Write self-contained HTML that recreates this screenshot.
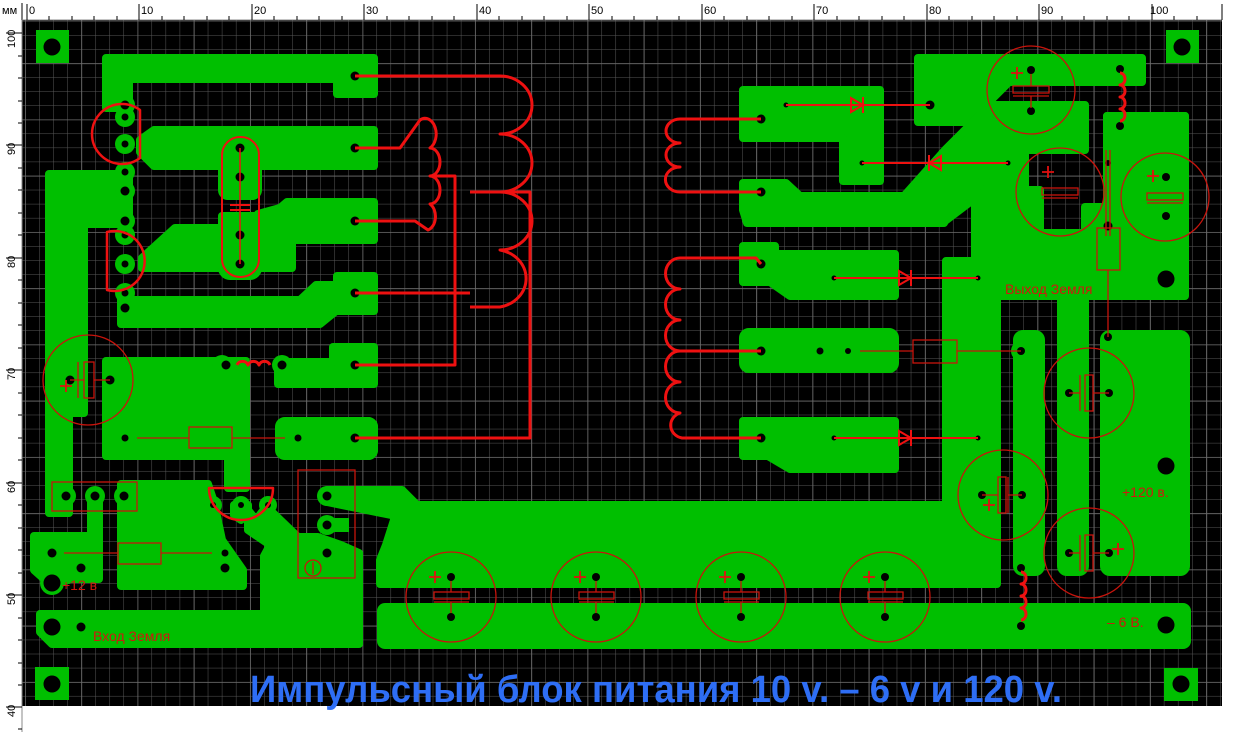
<!DOCTYPE html>
<html><head><meta charset="utf-8"><style>
html,body{margin:0;padding:0;background:#fff;}
svg{display:block;}
text{font-family:"Liberation Sans","DejaVu Sans",sans-serif;}
</style></head><body>
<svg width="1239" height="732" viewBox="0 0 1239 732" xmlns="http://www.w3.org/2000/svg">
<defs>
<pattern id="gmin" width="14.06" height="14.06" patternUnits="userSpaceOnUse" x="25" y="7">
<path d="M0 0V14.06M0 0H14.06" stroke="#595959" stroke-width="1" fill="none"/>
</pattern>
<pattern id="gmaj" width="56.25" height="56.25" patternUnits="userSpaceOnUse" x="25" y="7">
<path d="M0 0V56.25M0 0H56.25" stroke="#6c6c6c" stroke-width="1.6" fill="none"/>
</pattern>
</defs>
<rect width="1239" height="732" fill="#fff"/>
<rect x="22" y="20" width="1200" height="686" fill="#000"/>
<rect x="22" y="20" width="1200" height="686" fill="url(#gmin)"/>
<rect x="22" y="20" width="1200" height="686" fill="url(#gmaj)"/>

<!-- rulers -->
<g font-size="11" fill="#000">
<text x="2" y="14">мм</text>
<line x1="22" y1="3" x2="22" y2="20" stroke="#000"/>
<line x1="22" y1="20" x2="1222" y2="20" stroke="#888"/>
<line x1="22" y1="20" x2="22" y2="732" stroke="#888"/>
<g text-anchor="start">
<text x="29" y="14">0</text><text x="141" y="14">10</text><text x="254" y="14">20</text><text x="366" y="14">30</text><text x="479" y="14">40</text><text x="591" y="14">50</text><text x="704" y="14">60</text><text x="816" y="14">70</text><text x="929" y="14">80</text><text x="1041" y="14">90</text><text x="1150" y="14">100</text>
</g>
<g stroke="#000" stroke-width="1">
<path d="M27 4V20M139 4V20M252 4V20M364 4V20M477 4V20M589 4V20M702 4V20M814 4V20M927 4V20M1039 4V20M1152 4V20M1222 4V20"/>
<path d="M49 16V20M72 16V20M94 16V20M117 16V20M162 16V20M184 16V20M207 16V20M229 16V20M274 16V20M297 16V20M319 16V20M342 16V20M387 16V20M409 16V20M432 16V20M454 16V20M499 16V20M522 16V20M544 16V20M567 16V20M612 16V20M634 16V20M657 16V20M679 16V20M724 16V20M747 16V20M769 16V20M792 16V20M837 16V20M859 16V20M882 16V20M904 16V20M949 16V20M972 16V20M994 16V20M1017 16V20M1062 16V20M1084 16V20M1107 16V20M1129 16V20M1174 16V20M1197 16V20"/>
<path d="M6 33H22M6 145H22M6 258H22M6 370H22M6 483H22M6 595H22M6 707H22"/>
<path d="M18 56H22M18 78H22M18 101H22M18 123H22M18 168H22M18 190H22M18 213H22M18 235H22M18 280H22M18 303H22M18 325H22M18 348H22M18 393H22M18 415H22M18 438H22M18 460H22M18 505H22M18 528H22M18 550H22M18 573H22M18 618H22M18 640H22M18 663H22M18 685H22M18 729H22"/>
</g>
<g>
<text transform="translate(15,48) rotate(-90)">100</text>
<text transform="translate(15,155) rotate(-90)">90</text>
<text transform="translate(15,268) rotate(-90)">80</text>
<text transform="translate(15,380) rotate(-90)">70</text>
<text transform="translate(15,493) rotate(-90)">60</text>
<text transform="translate(15,605) rotate(-90)">50</text>
<text transform="translate(15,717) rotate(-90)">40</text>
</g>
</g>

<!-- GREEN COPPER -->
<g fill="#00bf00" stroke="#00bf00" stroke-width="8" stroke-linejoin="round">
<rect x="36" y="30" width="33" height="33" stroke-width="0"/>
<rect x="1166" y="30" width="33" height="33" stroke-width="0"/>
<rect x="35" y="667" width="34" height="33" stroke-width="0"/>
<rect x="1164" y="668" width="34" height="33" stroke-width="0"/>

<polygon points="106,58 374,58 374,94 337,94 337,79 129,79 129,108 106,108"/>
<circle cx="125" cy="105" r="10" stroke-width="0"/>
<circle cx="125" cy="117" r="10" stroke-width="0"/>
<polygon points="154,130 374,130 374,166 154,166 140,152 140,140"/>
<circle cx="125" cy="144" r="10" stroke-width="0"/>
<rect x="222" y="140" width="36" height="56" rx="6"/>
<polygon points="287,202 374,202 374,240 292,240 292,268 142,268 142,258 175,228 222,228 222,216 258,216 258,214 280,208"/>
<rect x="222" y="216" width="36" height="60" rx="8"/>
<circle cx="125" cy="264" r="10" stroke-width="0"/>
<polygon points="337,276 374,276 374,311 336,311 320,324 121,324 121,300 300,300 316,285 337,285"/>
<circle cx="125" cy="293" r="10" stroke-width="0"/>
<polygon points="49,174 129,174 129,224 84,224 84,413 69,413 69,513 49,513"/>
<circle cx="125" cy="172" r="10" stroke-width="0"/>
<circle cx="125" cy="191" r="10" stroke-width="0"/>
<circle cx="125" cy="221" r="10" stroke-width="0"/>
<circle cx="125" cy="235" r="10" stroke-width="0"/>
<polygon points="106,361 246,361 246,488 228,488 228,456 106,456"/>
<circle cx="222" cy="365" r="10" stroke-width="0"/>
<polygon points="333,347 374,347 374,384 278,384 278,362 333,362"/>
<circle cx="282" cy="365" r="10" stroke-width="0"/>
<rect x="279" y="421" width="95" height="35" rx="6"/>
<rect x="337" y="421" width="37" height="35" rx="6"/>
<circle cx="66" cy="496" r="10" stroke-width="0"/>
<circle cx="95" cy="496" r="10" stroke-width="0"/>
<circle cx="124" cy="496" r="10" stroke-width="0"/>
<rect x="87" y="496" width="16" height="50" stroke-width="0"/>
<polygon points="121,484 208,484 214,502 222,540 243,570 243,586 121,586"/>
<polygon points="34,536 99,536 99,579 70,579 52,586 34,570"/>
<circle cx="52" cy="583" r="12" stroke-width="0"/>
<circle cx="213" cy="505" r="9" stroke-width="0"/>
<circle cx="241" cy="505" r="9" stroke-width="0"/>
<circle cx="268" cy="505" r="9" stroke-width="0"/>
<polygon points="234,505 248,505 248,530 270,545 264,556 264,620 359,620 359,553 341,545 318,537 298,537 272,512 262,512 256,520 248,510 241,520 234,515"/>
<circle cx="327" cy="496" r="10" stroke-width="0"/>
<circle cx="327" cy="525" r="10" stroke-width="0"/>
<polygon points="327,490 402,490 416,504 416,520 327,502"/>
<rect x="327" y="518" width="22" height="14" stroke-width="0"/>
<polygon points="40,614 359,614 359,644 52,644 40,632"/>
<circle cx="52" cy="627" r="13" stroke-width="0"/>
<circle cx="81" cy="627" r="9" stroke-width="0"/>
<polygon points="394,505 991,505 991,584 380,584 380,560 386,545 394,520"/>
<rect x="381" y="607" width="806" height="38" rx="4"/>

<polygon points="918,58 1142,58 1142,82 1009,82 978,113 978,122 918,122"/>
<polygon points="743,90 880,90 880,181 843,181 843,138 743,138"/>
<polygon points="743,183 786,183 800,196 904,196 945,150 990,105 1085,105 1085,150 1025,150 1025,175 1000,178 978,196 945,221 944,223 747,223 743,210"/>
<polygon points="1107,116 1185,116 1185,296 975,296 975,190 1000,158 1025,158 1025,190 1040,190 1040,233 1085,233 1085,207 1107,207"/>
<polygon points="1107,116 1185,116 1185,178 1148,178 1148,240 1125,240 1125,232 1107,232"/>
<rect x="946" y="261" width="51" height="323"/>
<rect x="1017" y="334" width="24" height="238" rx="6"/>
<circle cx="1021" cy="351" r="10" stroke-width="0"/>
<rect x="1061" y="300" width="24" height="104" />
<rect x="1061" y="330" width="24" height="242" rx="6"/>
<rect x="1104" y="334" width="82" height="238" rx="6"/>
<polygon points="743,246 775,246 775,254 895,254 895,296 790,296 770,282 743,282"/>
<rect x="743" y="332" width="152" height="37" rx="6"/>
<polygon points="743,421 895,421 895,469 790,469 768,456 743,456"/>
</g>

<!-- HOLES -->
<g fill="#000">
<circle cx="52" cy="47" r="8.5"/><circle cx="1182" cy="47" r="8.5"/><circle cx="52" cy="684" r="8.5"/><circle cx="1181" cy="684" r="8.5"/>
<circle cx="52" cy="583" r="8.5"/><circle cx="52" cy="627" r="8.5"/><circle cx="1166" cy="279" r="8.5"/><circle cx="1166" cy="466" r="8.5"/><circle cx="1166" cy="625" r="8.5"/>
<circle cx="355" cy="76" r="4.5"/><circle cx="355" cy="148" r="4.5"/><circle cx="355" cy="221" r="4.5"/><circle cx="355" cy="293" r="4.5"/><circle cx="355" cy="365" r="4.5"/><circle cx="355" cy="438" r="4.5"/>
<circle cx="125" cy="105" r="4.5"/><circle cx="125" cy="117" r="3.5"/><circle cx="125" cy="144" r="3.5"/><circle cx="125" cy="172" r="3.5"/><circle cx="125" cy="191" r="4.5"/><circle cx="125" cy="221" r="4.5"/><circle cx="125" cy="235" r="3.5"/><circle cx="125" cy="264" r="3.5"/><circle cx="125" cy="293" r="3.5"/><circle cx="125" cy="308" r="4.5"/>
<circle cx="240" cy="148" r="4.5"/><circle cx="240" cy="177" r="4.5"/><circle cx="240" cy="235" r="4.5"/><circle cx="240" cy="264" r="4.5"/>
<circle cx="226" cy="365" r="4.5"/><circle cx="282" cy="365" r="4.5"/><circle cx="125" cy="438" r="3.5"/><circle cx="298" cy="438" r="3.5"/>
<circle cx="70" cy="380" r="4.5"/><circle cx="110" cy="380" r="4.5"/>
<circle cx="66" cy="496" r="4.5"/><circle cx="95" cy="496" r="4.5"/><circle cx="124" cy="496" r="4.5"/>
<circle cx="213" cy="505" r="3"/><circle cx="241" cy="505" r="3"/><circle cx="268" cy="505" r="3"/>
<circle cx="327" cy="496" r="4.5"/><circle cx="327" cy="525" r="4.5"/><circle cx="327" cy="553" r="4.5"/>
<circle cx="52" cy="553" r="4.5"/><circle cx="81" cy="568" r="4.5"/><circle cx="225" cy="553" r="3.5"/><circle cx="225" cy="568" r="4.5"/><circle cx="81" cy="627" r="4.5"/>
<circle cx="451" cy="577" r="4"/><circle cx="451" cy="617" r="4"/><circle cx="596" cy="577" r="4"/><circle cx="596" cy="617" r="4"/><circle cx="741" cy="577" r="4"/><circle cx="741" cy="617" r="4"/><circle cx="885" cy="577" r="4"/><circle cx="885" cy="617" r="4"/>
<circle cx="761" cy="119" r="4.5"/><circle cx="786" cy="105" r="2.5"/><circle cx="930" cy="105" r="4.5"/><circle cx="761" cy="192" r="4.5"/><circle cx="862" cy="163" r="2.5"/><circle cx="1008" cy="163" r="2.5"/>
<circle cx="1031" cy="70" r="4"/><circle cx="1031" cy="111" r="4"/><circle cx="1120" cy="69" r="4"/><circle cx="1120" cy="126" r="4"/>
<circle cx="1060" cy="171" r="4"/><circle cx="1060" cy="212" r="4"/><circle cx="1166" cy="177" r="4"/><circle cx="1166" cy="216" r="4"/><circle cx="1108" cy="163" r="3"/><circle cx="1108" cy="226" r="4.5"/>
<circle cx="761" cy="264" r="4.5"/><circle cx="834" cy="278" r="2.5"/><circle cx="978" cy="278" r="2.5"/>
<circle cx="761" cy="351" r="4.5"/><circle cx="820" cy="351" r="3.5"/><circle cx="848" cy="351" r="3"/><circle cx="1021" cy="351" r="4"/>
<circle cx="761" cy="438" r="4.5"/><circle cx="834" cy="438" r="2.5"/><circle cx="978" cy="438" r="2.5"/>
<circle cx="1108" cy="337" r="4"/><circle cx="1069" cy="393" r="4"/><circle cx="1109" cy="393" r="4"/>
<circle cx="982" cy="495" r="4"/><circle cx="1022" cy="495" r="4"/><circle cx="1069" cy="553" r="4"/><circle cx="1109" cy="553" r="4"/>
<circle cx="1021" cy="568" r="4"/><circle cx="1021" cy="626" r="4"/>
</g>

<g fill="none" stroke="#c8140c" stroke-width="1.3">
<circle cx="88" cy="380" r="45"/>
<rect x="84" y="362" width="10" height="36"/><path d="M78 362V398M70 380H84M94 380H110"/>
<rect x="189" y="427" width="43" height="21"/><path d="M137 438H189M232 438H285"/>
<rect x="52" y="482" width="85" height="29"/>
<rect x="118" y="543" width="43" height="21"/><path d="M64 553H118M161 553H212"/>
<rect x="298" y="470" width="57" height="108"/>
<circle cx="313" cy="568" r="8"/><path d="M313 562V574"/>
<g id="cap">
<circle cx="451" cy="597" r="45"/><rect x="434" y="592" width="35" height="7"/><path d="M434 602H469M451 581V592M451 602V613"/>
</g>
<use href="#cap" x="145"/><use href="#cap" x="290"/><use href="#cap" x="434"/>
<circle cx="1031" cy="90" r="44"/><rect x="1013" y="86" width="36" height="7"/><path d="M1013 96H1049M1031 74V86M1031 96V108"/>
<circle cx="1060" cy="192" r="44"/><rect x="1042" y="188" width="36" height="7"/><path d="M1042 198H1078"/>
<circle cx="1165" cy="197" r="44"/><rect x="1147" y="193" width="36" height="7"/><path d="M1147 203H1183"/>
<path d="M1106 150V236M1110 150V236"/>
<rect x="1097" y="228" width="23" height="42"/><path d="M1108 270V337"/>
<rect x="913" y="340" width="44" height="23"/><path d="M860 351H913M957 351H1021"/>
<circle cx="1089" cy="393" r="45"/><rect x="1085" y="375" width="8" height="36"/><path d="M1080 375V411M1069 393H1080M1093 393H1109"/>
<circle cx="1003" cy="495" r="45"/><rect x="998" y="477" width="8" height="36"/><path d="M1008 477V513M982 495H998M1008 495H1022"/>
<circle cx="1089" cy="553" r="45"/><rect x="1085" y="535" width="8" height="36"/><path d="M1080 535V571M1069 553H1080M1093 553H1109"/>
</g>
<g fill="none" stroke="#e01010" stroke-width="1.8">
<path d="M60 386H72M66 380V392M983 505H995M989 499V511M1112 549H1124M1118 543V555"/>
<path d="M429 577H441M435 571V583M574 577H586M580 571V583M719 577H731M725 571V583M863 577H875M869 571V583"/>
<path d="M1011 73H1023M1017 67V79M1042 172H1054M1048 166V178M1147 176H1159M1153 170V182"/>
</g>

<g fill="none" stroke="#ee1111" stroke-width="3" stroke-linejoin="round">
<path d="M355 76H500 A32 29 0 0 1 500 134 A32 29 0 0 1 500 192 A32 29 0 0 1 500 250 A32 29 0 0 1 500 307 H470 M355 293H470"/>
<path d="M355 148H400 L420 120 A10 14 0 0 1 430 148 A10 14 0 0 1 430 176 A10 14 0 0 1 430 204 A10 14 0 0 1 428 230 L415 221 H355"/>
<path d="M430 176H455V365H355"/>
<path d="M470 192H530V438H355"/>
<path d="M761 119H680 A14 12 0 0 0 680 143 A14 12 0 0 0 680 167 A14 12 0 0 0 680 192 H761"/>
<path d="M761 264 L756 258 H680 A14 15 0 0 0 680 289 A14 15 0 0 0 680 320 A14 15 0 0 0 680 351 A14 15 0 0 0 680 382 A14 15 0 0 0 680 413 A14 13 0 0 0 682 438 H761 M680 351H761"/>
<path d="M237 365 a6 6 0 0 1 11 0 a6 6 0 0 1 11 0 a6 6 0 0 1 11 0"/>
<path d="M1120 73 a5 6 0 0 1 0 12 a5 6 0 0 1 0 12 a5 6 0 0 1 0 12 a5 6 0 0 1 0 12"/>
<path d="M1021 572 a5 6 0 0 1 0 12 a5 6 0 0 1 0 12 a5 6 0 0 1 0 12 a5 6 0 0 1 0 12"/>
<rect x="222" y="137" width="37" height="140" rx="18" stroke-width="2"/>
<path d="M240 148V264" stroke-width="1.5"/><path d="M230 205H250M230 210H250" stroke-width="2"/>
<path d="M140 110 A30 30 0 1 0 140 158 Z" stroke-width="2.5"/>
<path d="M107 232 A30 30 0 1 1 107 290 Z" stroke-width="2.5"/>
<path d="M209 488 H273 A32 32 0 1 1 209 488 Z" stroke-width="2.5"/>
</g>
<g stroke="#ee1111" stroke-width="2" fill="none">
<path d="M786 105H930M862 163H1008M834 278H978M834 438H978"/>
<path d="M851 98V112L863 105Z M863 97V113"/>
<path d="M941 156V170L929 163Z M929 155V171"/>
<path d="M899 271V285L911 278Z M911 270V286"/>
<path d="M899 431V445L911 438Z M911 430V446"/>
</g>

<g fill="#d0180e" font-size="14">
<text x="62" y="590">+12 в</text>
<text x="93" y="641">Вход Земля</text>
<text x="1005" y="294">Выход Земля</text>
<text x="1122" y="497">+120 в.</text>
<text x="1107" y="627">– 6 В.</text>
</g>
<text x="250" y="702" font-size="38" font-weight="bold" fill="#2e6ef5" textLength="812" lengthAdjust="spacingAndGlyphs" font-family="'Liberation Sans',sans-serif">Импульсный блок питания 10 v. – 6 v и 120 v.</text>
</svg>
</body></html>
